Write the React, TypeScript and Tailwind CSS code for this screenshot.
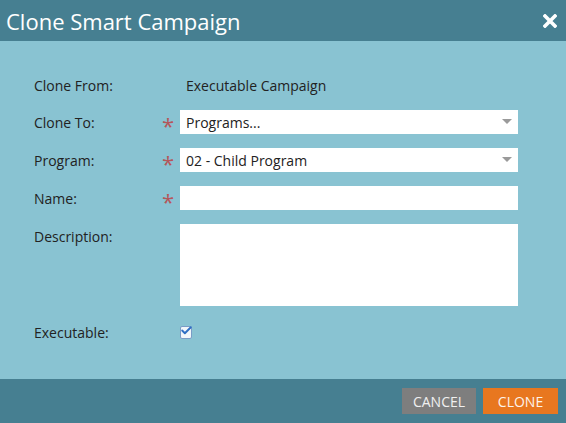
import { Check } from 'lucide-react';

// ── Pflichtfeld-Stern ───────────────────────────────────────────────

function Star({ show = true }: { show?: boolean }) {
  return (
    <span className="w-[20px] shrink-0 text-[22px] leading-none text-[#b5565a] pt-[6px] pr-[4px] flex justify-center">
      {show ? '*' : ''}
    </span>
  );
}

function Caret() {
  return (
    <svg width="10" height="6" viewBox="0 0 10 6" className="absolute right-[6px] top-[9px]">
      <path d="M0 0 L10 0 L5 5 Z" fill="#9a9a9a" />
    </svg>
  );
}

export default function App() {
  return (
    <div
      className="w-[566px] h-[423px] flex flex-col bg-[#89c3d2] text-[#222] text-[14px]"
      style={{ fontFamily: '"Open Sans", "Noto Sans", sans-serif' }}
    >
      {/* Header */}
      <div className="h-[41px] shrink-0 bg-[#467f91] flex items-center justify-between pl-[6px] pr-[8px]">
        <span className="text-white text-[22px] leading-none">Clone Smart Campaign</span>
        <svg width="14" height="14" viewBox="0 0 14 14" className="mr-[1px]">
          <path d="M2 2 L12 12 M12 2 L2 12" stroke="#fff" strokeWidth="3.6" strokeLinecap="square" />
        </svg>
      </div>

      {/* Body */}
      <div className="flex-1 flex flex-col pl-[34px] pt-[32px]">
        <div className="flex items-center h-[24px]">
          <span className="w-[126px]">Clone From:</span>
          <span className="w-[20px]" />
          <span className="pl-[6px]">Executable Campaign</span>
        </div>

        <div className="flex items-center h-[24px] mt-[13px]">
          <span className="w-[126px]">Clone To:</span>
          <Star />
          <div className="relative w-[338px] h-[24px] bg-white flex items-center pl-[6px]">
            Programs...
            <Caret />
          </div>
        </div>

        <div className="flex items-center h-[24px] mt-[14px]">
          <span className="w-[126px]">Program:</span>
          <Star />
          <div className="relative w-[338px] h-[24px] bg-white flex items-center pl-[6px]">
            02 - Child Program
            <Caret />
          </div>
        </div>

        <div className="flex items-center h-[24px] mt-[14px]">
          <span className="w-[126px]">Name:</span>
          <Star />
          <div className="w-[338px] h-[24px] bg-white" />
        </div>

        <div className="flex items-start mt-[14px]">
          <span className="w-[126px] leading-[26px]">Description:</span>
          <span className="w-[20px]" />
          <div className="w-[338px] h-[82px] bg-white" />
        </div>

        <div className="flex items-center h-[24px] mt-[14px]">
          <span className="w-[146px]">Executable:</span>
          <span className="w-[12px] h-[13px] bg-[#f2f6fa] border border-[#7a9cc6] rounded-[2px] relative">
            <Check size={13} strokeWidth={3.5} className="absolute -top-[3px] -left-[1px] text-[#2f6fc4]" />
          </span>
        </div>
      </div>

      {/* Footer */}
      <div className="h-[44px] shrink-0 bg-[#467f91] flex items-center justify-end gap-[7px] pr-[8px]">
        <button className="w-[74px] h-[26px] bg-[#7e7e7e] text-[#f0f0f0] text-[14px] uppercase">Cancel</button>
        <button className="w-[75px] h-[26px] bg-[#e8771f] text-[#fdf3ea] text-[14px] uppercase">Clone</button>
      </div>
    </div>
  );
}
